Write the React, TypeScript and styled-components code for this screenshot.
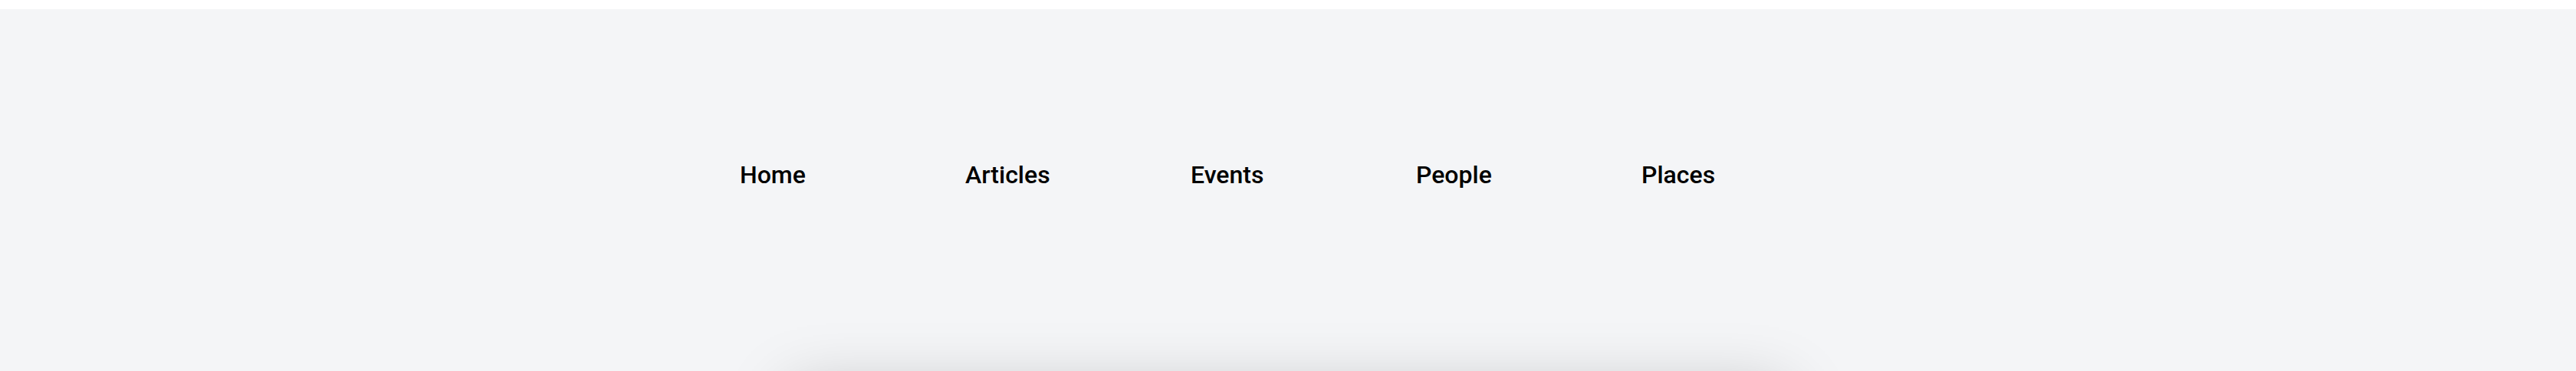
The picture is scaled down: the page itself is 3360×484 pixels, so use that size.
import React, { FC } from "react";
import styled, { createGlobalStyle } from "styled-components";

const GlobalStyle = createGlobalStyle`
  html, body {
    margin: 0;
    padding: 0;
    background: #ffffff;
  }
  body {
    font-family: Roboto, "Liberation Sans", sans-serif;
  }
`;

const links = ["Home", "Articles", "Events", "People", "Places"];

const App: FC = () => {
  return (
    <>
      <GlobalStyle />
      <Page>
        <Header>
          <NavList>
            {links.map((label) => (
              <NavItem key={label}>
                <NavLink href="#">{label}</NavLink>
              </NavItem>
            ))}
          </NavList>
        </Header>
        <Card />
      </Page>
    </>
  );
};

export default App;

const Page = styled.main`
  margin-top: 12px;
  background: #f4f5f7;
  min-height: 1000px;
  overflow: hidden;
`;

const Header = styled.header`
  display: flex;
  justify-content: center;
  padding-top: 198px;
  height: 300px;
  box-sizing: border-box;
`;

const NavList = styled.ul`
  display: flex;
  list-style: none;
  margin: 0;
  padding: 0 0 0 40px;
`;

const NavItem = styled.li`
  width: 294px;
`;

const NavLink = styled.a`
  font-size: 32px;
  font-weight: 500;
  line-height: 37px;
  color: #000000;
  text-decoration: none;
`;

const Card = styled.section`
  width: 1300px;
  height: 400px;
  margin: 196px auto 0;
  background: #ffffff;
  box-shadow: 0 0 80px rgba(0, 0, 0, 0.22);
`;
